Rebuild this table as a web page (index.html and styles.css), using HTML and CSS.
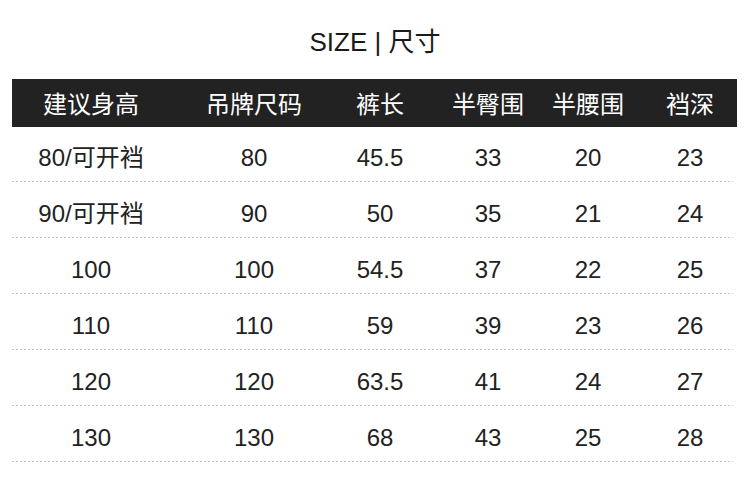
FILE: index.html
```html
<!DOCTYPE html>
<html lang="zh">
<head>
<meta charset="utf-8">
<title>SIZE | 尺寸</title>
<link rel="stylesheet" href="styles.css">
</head>
<body>
<div class="page">
  <h1 class="title">SIZE | 尺寸</h1>
  <div class="table">
    <div class="row head">
      <div class="cell">建议身高</div><div class="cell">吊牌尺码</div><div class="cell">裤长</div><div class="cell">半臀围</div><div class="cell">半腰围</div><div class="cell last">裆深</div>
    </div>
    <div class="row">
      <div class="cell">80/可开裆</div><div class="cell">80</div><div class="cell">45.5</div><div class="cell">33</div><div class="cell">20</div><div class="cell last">23</div>
    </div>
    <div class="row">
      <div class="cell">90/可开裆</div><div class="cell">90</div><div class="cell">50</div><div class="cell">35</div><div class="cell">21</div><div class="cell last">24</div>
    </div>
    <div class="row">
      <div class="cell">100</div><div class="cell">100</div><div class="cell">54.5</div><div class="cell">37</div><div class="cell">22</div><div class="cell last">25</div>
    </div>
    <div class="row">
      <div class="cell">110</div><div class="cell">110</div><div class="cell">59</div><div class="cell">39</div><div class="cell">23</div><div class="cell last">26</div>
    </div>
    <div class="row">
      <div class="cell">120</div><div class="cell">120</div><div class="cell">63.5</div><div class="cell">41</div><div class="cell">24</div><div class="cell last">27</div>
    </div>
    <div class="row">
      <div class="cell">130</div><div class="cell">130</div><div class="cell">68</div><div class="cell">43</div><div class="cell">25</div><div class="cell last">28</div>
    </div>
  </div>
</div>
</body>
</html>
```
FILE: styles.css
```css
html, body {
  margin: 0;
  padding: 0;
  background: #fff;
}
body {
  width: 750px;
  height: 494px;
  overflow: hidden;
  font-family: "Liberation Sans", "Noto Sans CJK SC", sans-serif;
  color: #222;
}
.page {
  padding: 0 12px;
}
.title {
  margin: 0;
  padding-top: 25px;
  height: 79px;
  box-sizing: border-box;
  font-size: 26px;
  font-weight: 400;
  line-height: 34px;
  text-align: center;
  color: #1a1a1a;
}
.table {
  width: 725px;
}
.row {
  display: grid;
  grid-template-columns: 158px 168px 84px 132px 68px 115px;
  height: 56px;
  box-sizing: border-box;
  background-image: repeating-linear-gradient(to right, #c4c4c4 0 2px, transparent 2px 4px);
  background-size: 721px 1px;
  background-position: 0 100%;
  background-repeat: no-repeat;
  padding-top: 9px;
  padding-bottom: 1px;
}
.row.head {
  height: 48px;
  padding: 0;
  background: #222;
  color: #fff;
  margin-bottom: -1px;
}
.cell {
  display: flex;
  align-items: center;
  justify-content: center;
  white-space: nowrap;
  font-size: 24px;
  line-height: 28px;
}
.head .cell {
  font-family: "Noto Sans CJK SC", sans-serif;
  font-size: 24px;
}
.cell.last {
  padding-left: 21px;
}
```
